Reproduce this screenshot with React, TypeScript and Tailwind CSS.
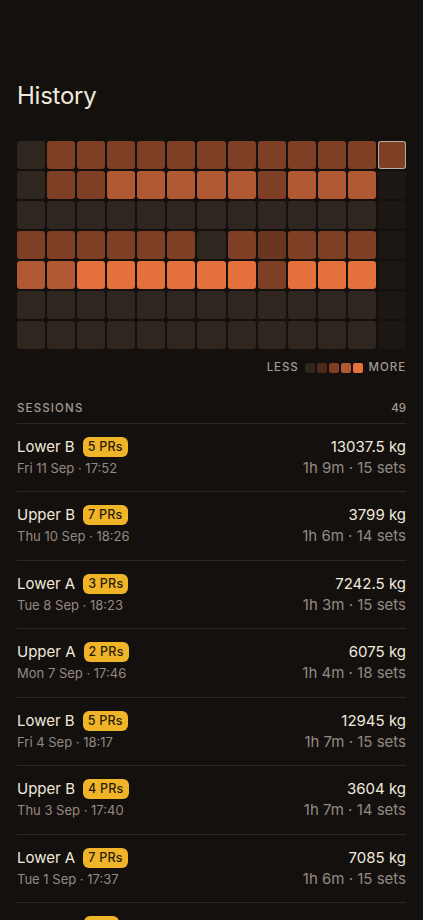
const EMPTY = 0;
const FUTURE = -1;

// rows are weekdays, columns are weeks
const grid: number[][] = [
  [0, 2, 2, 2, 2, 2, 2, 2, 2, 2, 2, 2, 5],
  [0, 2, 2, 3, 3, 3, 3, 3, 2, 3, 3, 3, -1],
  [0, 0, 0, 0, 0, 0, 0, 0, 0, 0, 0, 0, -1],
  [2, 2, 2, 2, 2, 2, 0, 2, 1, 2, 2, 2, -1],
  [3, 3, 4, 4, 4, 4, 4, 4, 2, 4, 4, 4, -1],
  [0, 0, 0, 0, 0, 0, 0, 0, 0, 0, 0, 0, -1],
  [0, 0, 0, 0, 0, 0, 0, 0, 0, 0, 0, 0, -1],
];

const cellClass = (v: number) => {
  switch (v) {
    case FUTURE:
      return "bg-[#1d1713]";
    case EMPTY:
      return "bg-[#302620]";
    case 1:
      return "bg-[#4f2a1b] bg-[radial-gradient(#6a3620_0.8px,transparent_0.8px)] bg-[length:2px_2px]";
    case 2:
      return "bg-[#7e3f24]";
    case 3:
      return "bg-[#b05932]";
    case 4:
      return "bg-[#e4703b]";
    case 5:
      return "bg-[#7e3f24] ring-1 ring-inset ring-[#b7aca2]";
    default:
      return "";
  }
};

type Session = {
  name: string;
  prs: string;
  date: string;
  weight: string;
  meta: string;
};

const sessions: Session[] = [
  { name: "Lower B", prs: "5 PRs", date: "Fri 11 Sep · 17:52", weight: "13037.5 kg", meta: "1h 9m · 15 sets" },
  { name: "Upper B", prs: "7 PRs", date: "Thu 10 Sep · 18:26", weight: "3799 kg", meta: "1h 6m · 14 sets" },
  { name: "Lower A", prs: "3 PRs", date: "Tue 8 Sep · 18:23", weight: "7242.5 kg", meta: "1h 3m · 15 sets" },
  { name: "Upper A", prs: "2 PRs", date: "Mon 7 Sep · 17:46", weight: "6075 kg", meta: "1h 4m · 18 sets" },
  { name: "Lower B", prs: "5 PRs", date: "Fri 4 Sep · 18:17", weight: "12945 kg", meta: "1h 7m · 15 sets" },
  { name: "Upper B", prs: "4 PRs", date: "Thu 3 Sep · 17:40", weight: "3604 kg", meta: "1h 7m · 14 sets" },
  { name: "Lower A", prs: "7 PRs", date: "Tue 1 Sep · 17:37", weight: "7085 kg", meta: "1h 6m · 15 sets" },
  { name: "Upper A", prs: "1 PR", date: "Mon 31 Aug · 18:02", weight: "10037.5 kg", meta: "1h 5m · 16 sets" },
];

export default function App() {
  return (
    <main className="min-h-screen bg-[#14100e] px-[17px] pt-[80px] pb-6 font-['Inter',sans-serif] text-[#f1e8dc]">
      <h1 className="text-[24px] leading-8 tracking-[-0.01em]">History</h1>

      <section className="mt-[29px]">
        <div className="grid grid-cols-13 gap-[2px]">
          {grid.flatMap((row, r) =>
            row.map((v, c) => (
              <div key={`${r}-${c}`} className={`h-[28px] rounded-[3px] ${cellClass(v)}`} />
            ))
          )}
        </div>

        <div className="mt-[10px] flex items-center justify-end gap-[6px] text-[11.5px] font-medium tracking-[0.08em] text-[#a39a91]">
          <span>LESS</span>
          <div className="flex gap-[2px]">
            <div className="h-[10px] w-[10px] rounded-[2px] bg-[#302620]" />
            <div className="h-[10px] w-[10px] rounded-[2px] bg-[#4f2a1b]" />
            <div className="h-[10px] w-[10px] rounded-[2px] bg-[#7e3f24]" />
            <div className="h-[10px] w-[10px] rounded-[2px] bg-[#b05932]" />
            <div className="h-[10px] w-[10px] rounded-[2px] bg-[#e4703b]" />
          </div>
          <span>MORE</span>
        </div>
      </section>

      <section className="mt-[24px]">
        <div className="flex items-center justify-between border-b border-[#2e2621] pb-[5px] text-[11.5px] font-medium tracking-[0.1em] text-[#a39a91]">
          <span>SESSIONS</span>
          <span className="tracking-normal">49</span>
        </div>

        <ul>
          {sessions.map((s, i) => (
            <li key={i} className="flex h-[68.5px] items-center justify-between border-b border-[#2e2621]">
              <div className="flex flex-col gap-[1px]">
                <div className="flex items-center gap-[8px]">
                  <span className="text-[15px] leading-5">{s.name}</span>
                  <span className="rounded-[6px] bg-[#f0b428] px-[5px] py-[2px] text-[12.5px] font-medium leading-4 tracking-[0.02em] text-[#2a1d0a]">
                    {s.prs}
                  </span>
                </div>
                <span className="text-[13px] leading-5 text-[#948a81]">{s.date}</span>
              </div>
              <div className="flex flex-col items-end gap-[1px]">
                <span className="text-[15px] leading-5">{s.weight}</span>
                <span className="text-[15px] leading-5 text-[#948a81]">{s.meta}</span>
              </div>
            </li>
          ))}
        </ul>
      </section>
    </main>
  );
}
